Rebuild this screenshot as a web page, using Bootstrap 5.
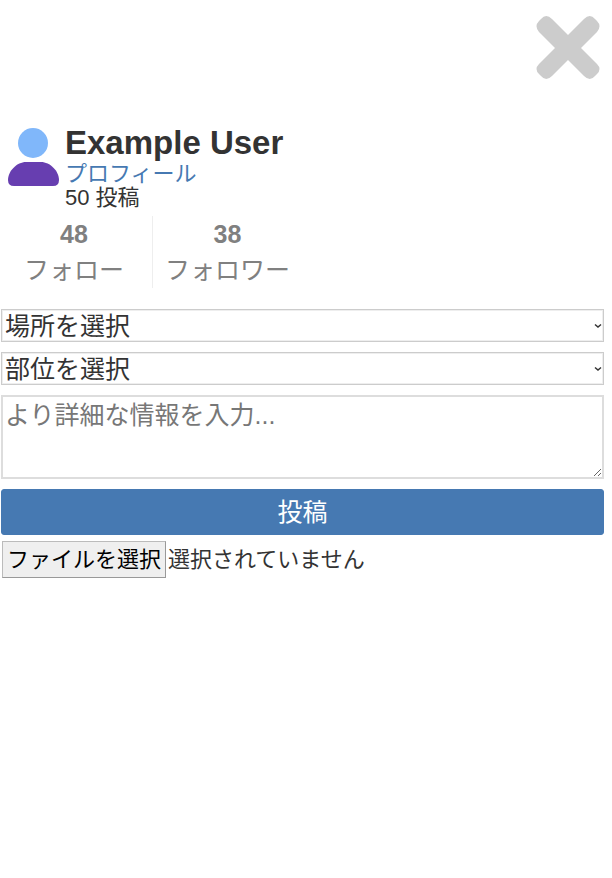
<!DOCTYPE html>
<html lang="ja">
<head>
<meta charset="utf-8">
<meta name="viewport" content="width=device-width, initial-scale=1">
<title>投稿</title>
<link href="https://cdn.jsdelivr.net/npm/bootstrap@5.3.0/dist/css/bootstrap.min.css" rel="stylesheet">
<style>
body { font-family: "Liberation Sans", "Noto Sans CJK JP", sans-serif; font-size: 22px; line-height: 24px; color: #333; background: #fff; }
a { color: #4679b2; }
.page-head { padding: 15px 11px 47px; }
.close-btn svg { width: 66px; height: 66px; display: block; }
.avatar { width: 52px; height: 60px; }
.profile-row { gap: 5px; }
.user-name { font-size: 33px; line-height: 30px; }
.stats { margin-top: 6px; }
.stat { font-size: 25px; line-height: 36px; color: #808080; padding: 0 12px; }
.stat:first-child { padding: 0 28px 0 24px; border-right: 1px solid #eee; }
.post-form { margin-top: 21px; padding: 0 8px 0 1px; font-size: 25px; }
.form-rows { gap: 10px; }
.field { color: #333; background-color: #fff; border: 2px solid #ddd; border-radius: 0; outline-offset: 0; }
.field::placeholder { color: #777; opacity: 1; }
.place-select { height: 33px; line-height: 30px; padding: 0 16px 0 3px; appearance: none; border: 1px solid #ccc; box-shadow: inset 0 0 0 1px #eee; }
.select-arrow { right: 2px; width: 8px; height: 6px; pointer-events: none; }
.detail-text { height: 84px; line-height: 36px; padding: 0 2px; resize: vertical; }
.submit-btn { height: 46px; line-height: 42px; padding: 0; font-size: 25px; color: #fff; background: #4679b2; border: 1px solid #4679b2; border-radius: 3px; }
.submit-btn:hover { color: #fff; background: #39669a; }
.file-row { font-size: 22px; gap: 2px; padding-left: 1px; margin-top: 6px; }
.file-btn { height: 37px; line-height: 35px; padding: 0 4px; color: #000; background: #efefef; border: 1px solid #bbb; border-right-color: #999; border-bottom-color: #999; cursor: pointer; }
</style>
<script src="https://cdn.jsdelivr.net/npm/bootstrap@5.3.0/dist/js/bootstrap.bundle.min.js"></script>
</head>
<body>
<header class="page-head d-flex justify-content-end">
  <button type="button" class="close-btn btn p-0 border-0" aria-label="閉じる">
    <svg viewBox="0 0 66 66" aria-hidden="true"><path d="M4 17Q-1 11 4 6L6 4Q11-2 17 4L33 20 49 4Q55-2 60 4L62 6Q67 11 62 17L46 33 62 49Q67 54 62 59L60 61Q55 67 49 61L33 45 17 61Q11 67 6 61L4 59Q-1 54 4 49L20 33Z" fill="#ccc"/></svg>
  </button>
</header>
<main>
  <section class="profile-row d-flex align-items-start px-2">
    <svg class="avatar flex-shrink-0" viewBox="0 0 52 60" aria-hidden="true"><circle cx="25" cy="15" r="15" fill="#80b7fa"/><path d="M18 34H33C42 34 51 43 51 52Q51 58 45 58H6Q0 58 0 52C0 43 9 34 18 34Z" fill="#673eb0"/></svg>
    <div>
      <h1 class="user-name fw-bold mb-1">Example User</h1>
      <a class="d-block text-decoration-none" href="#profile">プロフィール</a>
      <div>50 投稿</div>
    </div>
  </section>
  <section class="stats d-flex text-center">
    <div class="stat"><div class="fw-bold">48</div><div>フォロー</div></div>
    <div class="stat"><div class="fw-bold">38</div><div>フォロワー</div></div>
  </section>
  <form class="post-form">
    <div class="form-rows d-flex flex-column">
      <div class="position-relative d-flex align-items-center">
        <select class="field place-select w-100" aria-label="場所を選択"><option>場所を選択</option></select>
        <svg class="select-arrow position-absolute" viewBox="0 0 8 6" aria-hidden="true"><path d="M1 1.500 4 4 7 1.500" fill="none" stroke="#333" stroke-width="1.500"/></svg>
      </div>
      <div class="position-relative d-flex align-items-center">
        <select class="field place-select w-100" aria-label="部位を選択"><option>部位を選択</option></select>
        <svg class="select-arrow position-absolute" viewBox="0 0 8 6" aria-hidden="true"><path d="M1 1.500 4 4 7 1.500" fill="none" stroke="#333" stroke-width="1.500"/></svg>
      </div>
      <textarea class="field detail-text d-block w-100" aria-label="詳細な情報" placeholder="より詳細な情報を入力..."></textarea>
      <button type="submit" class="submit-btn btn w-100 d-block">投稿</button>
    </div>
    <div class="file-row d-flex align-items-center">
      <input class="visually-hidden" type="file" id="photo">
      <label class="file-btn" for="photo">ファイルを選択</label>
      <span>選択されていません</span>
    </div>
  </form>
</main>
</body>
</html>
